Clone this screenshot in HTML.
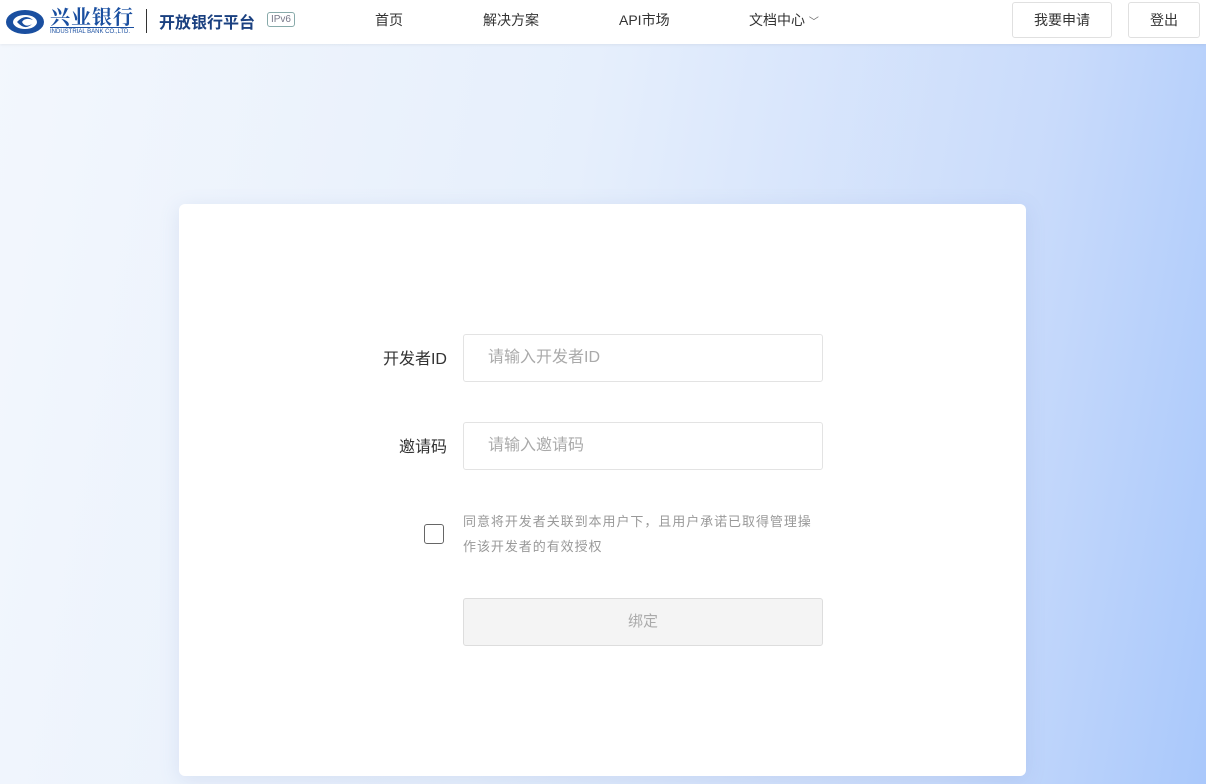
<!DOCTYPE html>
<html><head><meta charset="utf-8"><style>
*{margin:0;padding:0;box-sizing:border-box}
body{width:1206px;height:784px;overflow:hidden;font-family:"Liberation Sans","Noto Sans CJK SC",sans-serif;background:linear-gradient(100deg,#f3f7fd 0%,#e6effc 45%,#c9dbfb 80%,#a9c8fb 100%);position:relative}
.hd{position:absolute;left:0;top:0;width:1206px;height:44px;background:#fff;box-shadow:0 1px 3px rgba(0,0,0,.06)}
.nav{position:absolute;top:10px;font-size:14px;color:#333}
.btn{position:absolute;top:2px;height:36px;border:1px solid #e0e0e0;border-radius:3px;font-size:14px;color:#333;text-align:center;line-height:34px;background:#fff}
.card{position:absolute;left:179px;top:204px;width:847px;height:572px;background:#fff;border-radius:6px;box-shadow:0 4px 20px rgba(100,130,190,.15)}
.lbl{position:absolute;font-size:16px;color:#333;text-align:right;width:90px}
.inp{position:absolute;left:284px;width:360px;height:48px;border:1px solid #e3e3e3;border-radius:3px;font-size:16px;color:#aaa;padding-left:24px;line-height:46px}
</style></head><body>
<div class="hd">
<svg style="position:absolute;left:5px;top:9px" width="40" height="26" viewBox="0 0 40 26"><ellipse cx="20" cy="13" rx="19" ry="12" fill="#1a4fa0"/><ellipse cx="20" cy="13" rx="12" ry="7" fill="#fff"/><path d="M12 13 Q20 4 28 11 Q20 8 17 13 Q20 19 27 15 Q20 22 12 13Z" fill="#1a4fa0"/></svg>
<div style="position:absolute;left:50px;top:4px;font-family:'Noto Serif CJK SC',serif;font-size:20px;font-weight:bold;color:#1a4fa0;letter-spacing:1px;line-height:24px">兴业银行</div>
<div style="position:absolute;left:50px;top:27px;font-size:6px;color:#1a4fa0;border-top:1px solid #1a4fa0;width:84px;line-height:8px">INDUSTRIAL BANK CO.,LTD.</div>
<div style="position:absolute;left:146px;top:9px;width:1px;height:24px;background:#333"></div>
<div style="position:absolute;left:159px;top:9px;font-size:16px;font-weight:bold;color:#1a4080">开放银行平台</div>
<div style="position:absolute;left:267px;top:12px;width:28px;height:15px;border:1px solid #8aa;border-radius:3px;font-size:10px;color:#778;text-align:center;line-height:13px">IPv6</div>
<div class="nav" style="left:375px">首页</div>
<div class="nav" style="left:483px">解决方案</div>
<div class="nav" style="left:619px">API市场</div>
<div class="nav" style="left:749px">文档中心 <span style="font-size:10px;color:#666">﹀</span></div>
<div class="btn" style="left:1012px;width:100px">我要申请</div>
<div class="btn" style="left:1128px;width:72px">登出</div>
</div>
<div class="card">
<div class="lbl" style="left:178px;top:141px">开发者ID</div>
<div class="inp" style="top:130px">请输入开发者ID</div>
<div class="lbl" style="left:178px;top:229px">邀请码</div>
<div class="inp" style="top:218px">请输入邀请码</div>
<div style="position:absolute;left:245px;top:320px;width:20px;height:20px;border:1px solid #666;border-radius:3px"></div>
<div style="position:absolute;left:284px;top:305px;width:380px;font-size:13px;color:#999;line-height:25px;letter-spacing:0.95px;white-space:nowrap">同意将开发者关联到本用户下，且用户承诺已取得管理操<br>作该开发者的有效授权</div>
<div style="position:absolute;left:284px;top:394px;width:360px;height:48px;background:#f4f4f4;border:1px solid #ddd;border-radius:3px;text-align:center;line-height:46px;font-size:15px;color:#aaa">绑定</div>
</div>
</body></html>
